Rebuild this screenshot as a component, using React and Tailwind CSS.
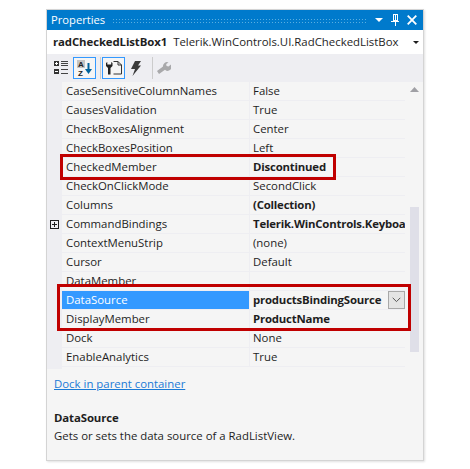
import { useState } from "react";

const rows = [
  { name: "CaseSensitiveColumnNames", value: "False" },
  { name: "CausesValidation", value: "True" },
  { name: "CheckBoxesAlignment", value: "Center" },
  { name: "CheckBoxesPosition", value: "Left" },
  { name: "CheckedMember", value: "Discontinued", bold: true },
  { name: "CheckOnClickMode", value: "SecondClick" },
  { name: "Columns", value: "(Collection)", bold: true },
  { name: "CommandBindings", value: "Telerik.WinControls.Keyboa", bold: true, expand: true },
  { name: "ContextMenuStrip", value: "(none)" },
  { name: "Cursor", value: "Default" },
  { name: "DataMember", value: "" },
  { name: "DataSource", value: "productsBindingSource", bold: true, selected: true },
  { name: "DisplayMember", value: "ProductName", bold: true },
  { name: "Dock", value: "None" },
  { name: "EnableAnalytics", value: "True" },
];

function Row({ row }) {
  return (
    <div className="flex h-[19px] shrink-0">
      <div className="w-[15px] shrink-0 bg-[#eeeef2] flex items-center justify-center">
        {row.expand && (
          <svg width="9" height="9" viewBox="0 0 9 9" fill="none" stroke="#1e1e1e" shapeRendering="crispEdges">
            <path d="M.5.5h8v8h-8zM2 4.500h5M4.500 2v5" />
          </svg>
        )}
      </div>
      <div className={`w-[187px] shrink-0 pl-[4px] leading-[18px] border-b border-[#eeeef2] ${row.selected ? "bg-[#3399ff] text-white" : ""}`}>
        {row.name}
      </div>
      <div className="w-[156px] shrink-0 flex border-l border-b border-[#eeeef2]">
        <div className={`flex-1 min-w-0 pl-[3px] leading-[18px] whitespace-nowrap overflow-hidden ${row.bold ? "font-bold tracking-[-0.2px]" : ""}`}>
          {row.value}
        </div>
        {row.selected && (
          <div className="w-[17px] h-[18px] shrink-0 border border-[#a8a8a8] bg-[#e4e4e4] flex items-center justify-center">
            <svg width="9" height="6" viewBox="0 0 9 6" fill="none" stroke="#555">
              <path d="M.7.8l3.800 3.800L8.300.8" />
            </svg>
          </div>
        )}
      </div>
    </div>
  );
}

function ToolIcons() {
  return (
    <div className="flex items-center h-[28px] pl-[7px]">
      {/* categorized */}
      <svg width="14" height="14" viewBox="0 0 14 14" shapeRendering="crispEdges">
        <path fill="#333" d="M0 0h5v5H0zM0 8h5v5H0z" />
        <path fill="#fff" d="M2 1h1v3H2zM1 2h3v1H1zM1 10h3v1H1z" />
        <path fill="#444" d="M7 0h7v1H7zM7 2h7v1H7zM7 4h7v1H7zM7 8h7v1H7zM7 12h7v1H7z" />
      </svg>
      {/* sorted a-z, active */}
      <div className="w-[23px] h-[22px] ml-[5px] border border-[#3399ff] bg-[#f5f5f5] flex items-center justify-center">
        <svg width="15" height="16" viewBox="0 0 15 16">
          <rect x="0" y="0" width="8" height="8" fill="#c4c4c4" />
          <text x="1" y="7" fontSize="8" fontWeight="700" fill="#222" fontFamily="Liberation Sans">A</text>
          <text x="1" y="15.500" fontSize="8" fontWeight="700" fill="#222" fontFamily="Liberation Sans">Z</text>
          <path d="M11.500 3v9" stroke="#00639c" strokeWidth="2" />
          <path d="M8 9l3.500 5L15 9z" fill="#00639c" />
        </svg>
      </div>
      <div className="w-px h-[22px] bg-[#ccc] ml-[4px]" />
      {/* properties, active */}
      <div className="w-[23px] h-[22px] ml-[1px] border border-[#3399ff] bg-[#f5f5f5] flex items-center justify-center">
        <svg width="16" height="14" viewBox="0 0 16 14">
          <path d="M7.500 .5h4.500l3.500 3.500v9h-8" fill="none" stroke="#333" />
          <path d="M12 .5v3.500h3.500" fill="none" stroke="#333" />
          <path d="M0 2v3l2 2v6.500h2.500V7l2-2V2L5.200 1v2.500H1.300V1z" fill="#222" />
        </svg>
      </div>
      {/* events */}
      <svg className="ml-[6px]" width="10" height="15" viewBox="0 0 10 15">
        <path d="M4 0h6L7 4.500h3L1.500 15 4 8H0z" fill="#3a3a3a" />
      </svg>
      <div className="w-px h-[22px] bg-[#ccc] ml-[11px]" />
      {/* property pages, disabled */}
      <svg className="ml-[4px]" width="14" height="12" viewBox="0 0 14 12">
        <path d="M14 2.500l-2.500 2-2-.5-.3-2L11.500 .4A4 4 0 0 0 6 4.500L0 9l2 3 6-4.300A4 4 0 0 0 14 2.500z" fill="#a9a9ab" />
      </svg>
    </div>
  );
}

export default function App() {
  const [rowsData] = useState(rows);

  return (
    <div className="relative w-[470px] h-[469px] bg-white pl-[46px] pt-[9px] text-[11.4px] text-[#1e1e1e] overflow-hidden" style={{ fontFamily: '"Open Sans", "Noto Sans", sans-serif' }}>
      <div className="w-[378px] h-[452px] flex flex-col bg-[#f5f5f5] border border-[#d4d4d4] shadow-[1px_1px_2px_rgba(0,0,0,0.12)]">
        {/* Title bar */}
        <div className="h-[20px] shrink-0 bg-[#007acc] flex items-center text-white pl-[4px] pr-[6px]">
          <span className="text-[11.2px] leading-[20px] w-[61px] shrink-0">Properties</span>
          <div className="flex-1 h-[5px] bg-[radial-gradient(#5aaee0_0.6px,transparent_0.8px)] bg-[length:3px_3px] mr-[9px]" />
          <div className="flex items-center gap-[8px]">
            <svg width="8" height="4" viewBox="0 0 8 4"><path d="M0 0h8L4 4z" fill="#fff" /></svg>
            <svg width="8" height="12" viewBox="0 0 8 12" fill="none" stroke="#fff" shapeRendering="crispEdges">
              <path d="M2 .5h4v6h-4zM4.500 1v5M0 7.500h8M4 8v4" />
            </svg>
            <svg width="10" height="10" viewBox="0 0 10 10" stroke="#fff" strokeWidth="1.800"><path d="M.7.7l8.600 8.600M9.300.7L.7 9.300" /></svg>
          </div>
        </div>

        {/* Object selector */}
        <div className="h-[24px] shrink-0 bg-white flex items-center pl-[6px] pr-[4px] whitespace-nowrap">
          <span className="font-bold tracking-[-0.1px]">radCheckedListBox1</span>
          <span className="ml-[6px]">Telerik.WinControls.UI.RadCheckedListBox</span>
          <svg className="ml-auto" width="6" height="3" viewBox="0 0 6 3"><path d="M0 0h6L3 3z" fill="#1e1e1e" /></svg>
        </div>

        {/* Toolbar */}
        <div className="h-[28px] shrink-0 bg-[#eeeef2]">
          <ToolIcons />
        </div>

        {/* Property grid */}
        <div className="flex h-[287px] shrink-0">
          <div className="w-[358px] shrink-0 flex flex-col">
            {rowsData.map((row) => (
              <Row key={row.name} row={row} />
            ))}
            <div className="w-[15px] flex-1 bg-[#eeeef2]" />
          </div>
          <div className="flex-1 flex flex-col items-center">
            <svg className="mt-[5px]" width="9" height="5" viewBox="0 0 9 5"><path d="M0 5h9L4.500 0z" fill="#a0a0a5" /></svg>
            <div className="w-[9px] h-[145px] mt-[115px] bg-[#dfdfe8]" />
          </div>
        </div>

        {/* Footer */}
        <div className="pl-[7px] pt-[6px]">
          <a href="#" className="text-[#1a7ad6] underline leading-[17px]">Dock in parent container</a>
          <div className="font-bold tracking-[-0.1px] mt-[17px] leading-[18px]">DataSource</div>
          <div className="leading-[18px]">Gets or sets the data source of a RadListView.</div>
        </div>
      </div>

      {/* Highlights */}
      <div className="absolute left-[60px] top-[154px] w-[276px] h-[26px] border-[3px] border-[#c00000]" />
      <div className="absolute left-[57px] top-[284px] w-[354px] h-[47px] border-[3px] border-[#c00000]" />
    </div>
  );
}
